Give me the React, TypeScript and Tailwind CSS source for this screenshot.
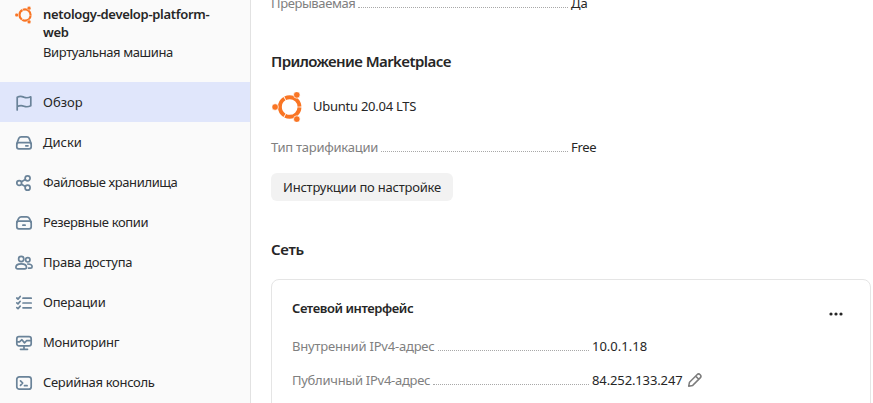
import type { ReactNode } from "react";

const icon = "mt-0.5 h-4 w-[18px] shrink-0 overflow-visible text-[#6a8399]";

function Icon({ children }: { children: ReactNode }) {
  return (
    <svg
      viewBox="0 0 18 16"
      className={icon}
      fill="none"
      stroke="currentColor"
      strokeWidth="1.7"
      strokeLinecap="round"
      strokeLinejoin="round"
    >
      {children}
    </svg>
  );
}

function Ubuntu({ className, gap }: { className: string; gap: string }) {
  return (
    <svg viewBox="0 0 30 30" className={className} fill="#f97524" stroke={gap} strokeWidth="0.7">
      <circle
        cx="17.7"
        cy="15"
        r="9.8"
        fill="none"
        stroke="#f97524"
        strokeWidth="3.9"
        pathLength="360"
        strokeDasharray="115 5"
        strokeDashoffset="-2.5"
      />
      <circle cx="3.1" cy="15" r="3.3" />
      <circle cx="24.8" cy="2.9" r="3.3" />
      <circle cx="24.8" cy="27.1" r="3.3" />
    </svg>
  );
}

const items = [
  {
    label: "Обзор",
    track: "tracking-[0px]",
    icon: <path d="M2.2 15V2.2C5.5.7 7 1.4 9 2.2s3.8 1 6.8-.4v9c-3 1.4-4.8 1.2-6.8.4s-4-1-6.8.4" />,
  },
  {
    label: "Диски",
    track: "tracking-[0px]",
    icon: (
      <>
        <path d="M1.8 8.8 3.8 3.4C4.3 2.2 5.2 1.8 6.2 1.8h5.6c1 0 1.9.4 2.4 1.6l2 5.4" />
        <rect x="1.8" y="7.6" width="14.4" height="6.2" rx="2" />
        <path d="M10.8 10.8h2.2" />
      </>
    ),
  },
  {
    label: "Файловые хранилища",
    track: "tracking-[-0.39px]",
    icon: (
      <>
        <circle cx="4.2" cy="8" r="2.4" />
        <circle cx="12.6" cy="3.3" r="2.5" />
        <circle cx="12.6" cy="12.7" r="2.5" />
        <path d="m6.5 6.8 3.8-2.2M6.5 9.2l3.8 2.2" />
      </>
    ),
  },
  {
    label: "Резервные копии",
    track: "tracking-[-0.34px]",
    icon: (
      <>
        <path d="M1.8 7.2 3.8 3.2C4.4 2.2 5.2 1.8 6.2 1.8h5.6c1 0 1.8.4 2.4 1.4l2 4" />
        <rect x="1.8" y="6.2" width="14.4" height="7.6" rx="2" />
        <path d="M7.9 10.2h2.2" />
      </>
    ),
  },
  {
    label: "Права доступа",
    track: "tracking-[-0.24px]",
    icon: (
      <>
        <circle cx="6.2" cy="4" r="2.6" />
        <path d="M.9 12.2C.9 9.9 3 8.8 6.2 8.8s5.3 1.1 5.3 3.4c0 1-.7 1.6-1.7 1.6H2.6c-1 0-1.7-.6-1.7-1.6Z" />
        <circle cx="12.8" cy="4.8" r="2.2" />
        <path d="M12.8 9c2.6 0 4.3.9 4.3 2.8 0 .9-.6 1.4-1.5 1.4h-2" />
      </>
    ),
  },
  {
    label: "Операции",
    track: "tracking-[-0.2px]",
    icon: (
      <>
        <path d="M8 3.2h8.2M8 8h8.2M8 12.8h8.2" />
        <path d="m1.8 3 1.2 1.1L5.2 1.5M1.8 7.8l1.2 1.1 2.2-2.6M1.8 12.6l1.2 1.1 2.2-2.6" />
      </>
    ),
  },
  {
    label: "Мониторинг",
    track: "tracking-[-0.28px]",
    icon: (
      <>
        <rect x="1.8" y="1.7" width="14.4" height="9.2" rx="2.2" />
        <path d="M2.5 6.8h2L6.9 4.7l2.6 3.2 2-2.2h4M9 11v3.2M5.5 14.3h7" />
      </>
    ),
  },
  {
    label: "Серийная консоль",
    track: "tracking-[-0.32px]",
    icon: (
      <>
        <rect x="1.8" y="1.8" width="14.4" height="12.4" rx="2.5" />
        <path d="m5.5 5.8 2.2 2.2-2.2 2.3M9.5 10.7h2.6" />
      </>
    ),
  },
];

function Row({ label, track, children }: { label: string; track: string; children: ReactNode }) {
  return (
    <div className="flex h-[18px] items-baseline">
      <div className="flex w-[300px] shrink-0 items-baseline gap-[3px]">
        <span className={"shrink-0 whitespace-nowrap text-[#808080] " + track}>{label}</span>
        <span className="mr-[3px] flex-1 border-b border-dotted border-[#a8a8a8]" />
      </div>
      {children}
    </div>
  );
}

export default function App() {
  return (
    <div className="flex h-[403px] w-[873px] overflow-hidden bg-white font-['Noto_Sans',sans-serif] text-[13px] leading-[18px] text-[#262626]">
      <aside className="w-[251px] shrink-0 border-r border-[#e2e2e2] bg-[#fafafa]">
        <header className="flex h-[82px] gap-2.5 pt-[5px] pl-[15px]">
          <Ubuntu className="mt-[1px] mr-[1px] h-[18px] w-[17px] shrink-0" gap="#fafafa" />
          <div>
            <div className="w-[190px] font-semibold tracking-[-0.31px]">
              netology-develop-platform-
              <br />
              web
            </div>
            <div className="mt-[2px] tracking-[-0.39px]">Виртуальная машина</div>
          </div>
        </header>
        <nav>
          {items.map((item, i) => (
            <div
              key={item.label}
              className={"flex h-10 items-center gap-2.5 pl-[15px] " + (i === 0 ? "bg-[#e0e6fb]" : "")}
            >
              <Icon>{item.icon}</Icon>
              <span className={"whitespace-nowrap " + item.track}>{item.label}</span>
            </div>
          ))}
        </nav>
      </aside>

      <main className="flex min-w-0 flex-1 flex-col pr-[2px] pl-5">
        <div className="-mt-[6px]">
          <Row label="Прерываемая" track="tracking-[-0.4px]">
            <span>Да</span>
          </Row>
        </div>
        <h2 className="mt-[39px] text-[15px] leading-5 font-semibold tracking-[-0.58px]">Приложение Marketplace</h2>
        <div className="mt-[21px] flex h-[30px] items-center gap-[11px] pl-[1px]">
          <Ubuntu className="h-[30px] w-[30px]" gap="#ffffff" />
          <span className="-mt-0.5 tracking-[-0.25px]">Ubuntu 20.04 LTS</span>
        </div>
        <div className="mt-4">
          <Row label="Тип тарификации" track="tracking-[-0.27px]">
            <span className="tracking-[-0.3px]">Free</span>
          </Row>
        </div>
        <button className="mt-[17px] h-7 w-[182px] shrink-0 rounded-[6px] bg-[#f2f2f2] tracking-[-0.22px] whitespace-nowrap">
          Инструкции по настройке
        </button>
        <h2 className="mt-[38px] text-[15px] leading-5 font-semibold tracking-[-0.3px]">Сеть</h2>
        <section className="mt-5 h-[140px] shrink-0 rounded-[8px] border border-[#e5e5e5] px-5 pt-[19px]">
          <div className="flex h-7 items-start justify-between">
            <h3 className="font-semibold tracking-[-0.41px]">Сетевой интерфейс</h3>
            <svg viewBox="0 0 16 16" className="mt-[7px] mr-[6px] h-4 w-4" fill="#262626">
              <circle cx="3" cy="8" r="1.6" />
              <circle cx="8" cy="8" r="1.6" />
              <circle cx="13" cy="8" r="1.6" />
            </svg>
          </div>
          <div className="mt-[10px] flex flex-col gap-4">
            <Row label="Внутренний IPv4-адрес" track="tracking-[-0.2px]">
              <span>10.0.1.18</span>
            </Row>
            <Row label="Публичный IPv4-адрес" track="tracking-[-0.27px]">
              <span className="tracking-[-0.12px]">84.252.133.247</span>
              <svg
                viewBox="0 0 16 16"
                className="ml-1 h-4 w-4 self-center"
                fill="none"
                stroke="#7c7c7c"
                strokeWidth="1.5"
                strokeLinejoin="round"
              >
                <path d="M1.7 14.2l.8-4 7.5-7.5a2.25 2.25 0 0 1 3.2 3.2L5.7 13.4 1.7 14.2ZM8.6 4.1l3.2 3.2" />
              </svg>
            </Row>
          </div>
        </section>
      </main>
    </div>
  );
}
